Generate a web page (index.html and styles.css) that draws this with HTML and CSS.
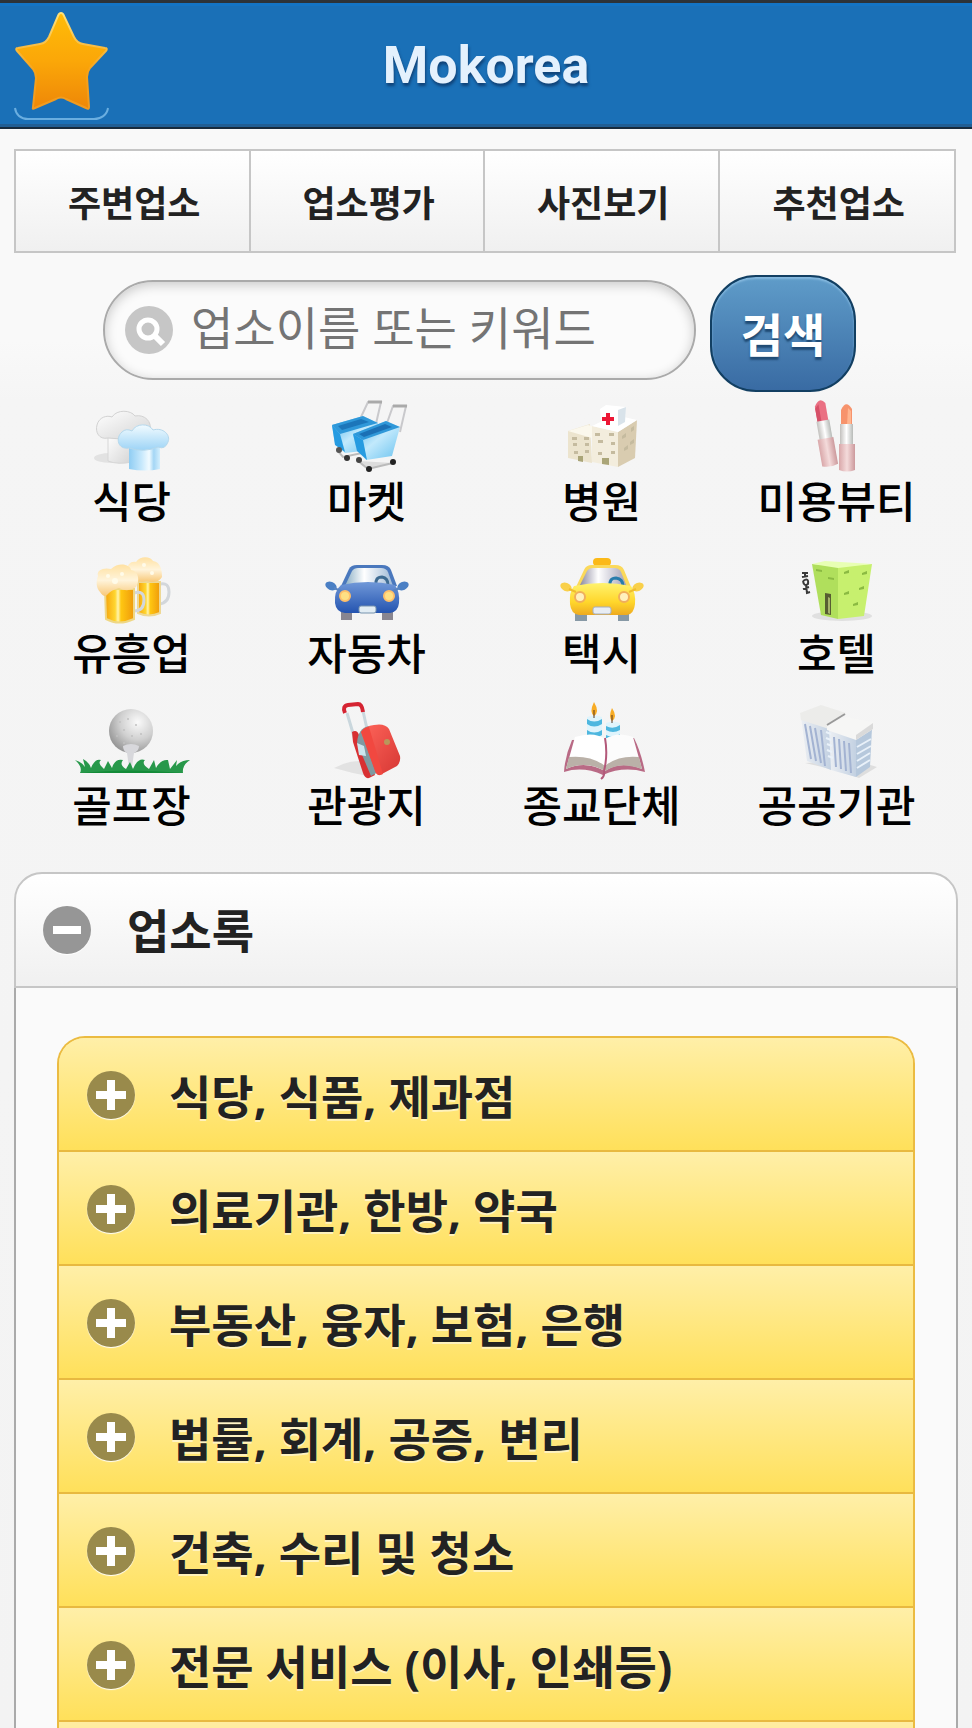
FILE: index.html
```html
<!DOCTYPE html>
<html lang="ko">
<head>
<meta charset="utf-8">
<meta name="viewport" content="width=device-width, initial-scale=1">
<title>Mokorea</title>
<link rel="stylesheet" href="styles.css">
</head>
<body>
<div class="page">
<header class="topbar">
  <a class="star-link" href="#" aria-label="Home">
    <svg viewBox="0 0 96 110" width="96" height="110">
      <defs><linearGradient id="starFill" x1="0" y1="0" x2="0" y2="1"><stop offset="0" stop-color="#ffbc08"/><stop offset=".5" stop-color="#fba708"/><stop offset="1" stop-color="#ee8708"/></linearGradient>
      <linearGradient id="starEdge" x1="0" y1="0" x2="0" y2="1"><stop offset="0" stop-color="#ffe27a"/><stop offset=".6" stop-color="#f5a31c"/><stop offset="1" stop-color="#f09a20"/></linearGradient></defs>
      <path d="M1 98C2 105 7 109 14 109H80C87 109 93 105 94 98" fill="none" stroke="#6aaee0" stroke-width="2"/>
      <path d="M47 3Q49 3 50 6L60 27Q63 33 69 34L91 38Q94 38 92 41L76 58Q73 62 73 67L75 97Q75 100 72 98L52 89Q47 86 42 89L21 98Q18 100 19 97L22 68Q22 63 19 59L3 41Q1 38 4 38L26 34Q32 33 35 27L44 6Q45 3 47 3Z" fill="url(#starFill)" stroke="url(#starEdge)" stroke-width="2"/>
    </svg>
  </a>
  <h1 class="brand">Mokorea</h1>
</header>
<nav class="tabs">
  <a href="#">주변업소</a><a href="#">업소평가</a><a href="#">사진보기</a><a href="#">추천업소</a>
</nav>
<form class="search" role="search">
  <label class="search-field">
    <svg viewBox="0 0 48 48" width="48" height="48" aria-hidden="true"><circle cx="24" cy="24" r="24" fill="#c6c6c6"/><circle cx="23" cy="23" r="9" fill="none" stroke="#fff" stroke-width="5"/><path d="M29 29L38 38" stroke="#fff" stroke-width="6"/></svg>
    <input type="search" placeholder="업소이름 또는 키워드" aria-label="업소이름 또는 키워드">
  </label>
  <button type="button">검색</button>
</form>
<main>
<section class="categories">
  <a href="#"><svg viewBox="0 0 88 80" width="88" height="80">
    <defs><linearGradient id="hatBlue"><stop offset="0" stop-color="#8fcdf3"/><stop offset=".4" stop-color="#c6e8fc"/><stop offset=".65" stop-color="#f2fbff"/><stop offset=".8" stop-color="#a4d6f5"/><stop offset="1" stop-color="#d4effd"/></linearGradient>
    <linearGradient id="hatGrey" x1="0" y1="0" x2="1" y2="1"><stop offset="0" stop-color="#fff"/><stop offset="1" stop-color="#d4d4d4"/></linearGradient>
    <linearGradient id="hatTop" x1="0" y1="0" x2="0" y2="1"><stop offset="0" stop-color="#f2fbff"/><stop offset="1" stop-color="#9dd4f6"/></linearGradient></defs>
    <ellipse cx="23" cy="62" rx="17" ry="5" fill="#e2e2e2"/><path d="M20 38V65Q30 69 44 66V38Z" fill="url(#hatGrey)" stroke="#d6d6d6"/>
    <path d="M20 42C11 44 7 36 9 29C11 21 19 19 24 21C29 13 43 14 47 20C57 18 64 26 62 34Q50 46 20 42Z" fill="url(#hatGrey)" stroke="#d2d2d2"/>
    <path d="M41 48H72V73Q57 76 41 73Z" fill="url(#hatBlue)"/>
    <path d="M41 52C30 54 27 42 34 36Q38 32 44 35C48 27 61 27 65 34C75 31 83 39 80 46Q77 54 70 51Q56 57 41 52Z" fill="url(#hatTop)" stroke="#b5d8ec"/></svg><span>식당</span></a>
  <a href="#"><svg viewBox="0 0 88 80" width="88" height="80">
    <defs><linearGradient id="cartSide" x1="0" y1="0" x2="1" y2="1"><stop offset="0" stop-color="#45aee8"/><stop offset=".5" stop-color="#c2e9fc"/><stop offset="1" stop-color="#69c2ef"/></linearGradient></defs>
    <path d="M38 21L45 6H58L52 32" fill="none" stroke="#c9c9cc" stroke-width="2"/><path d="M45 6H59" stroke="#aaa" stroke-width="3"/>
    <path d="M14 54L20 61L49 55" fill="none" stroke="#bbb" stroke-width="2"/><path d="M9 29L40 20L55 27L48 54L22 57L12 48Z" fill="url(#cartSide)"/><path d="M9 29L40 20L55 27L17 38Z" fill="#2f98d9"/><path d="M15 30L38 23L46 26L19 34Z" fill="#1c76ba"/><path d="M9 29L17 38L22 56L12 49Z" fill="#269be1"/><circle cx="16" cy="54" r="3" fill="#555"/><circle cx="24" cy="62" r="3" fill="#333"/>
    <path d="M64 27L70 10H83L77 36" fill="none" stroke="#c9c9cc" stroke-width="2"/><path d="M70 10H84" stroke="#aaa" stroke-width="3"/>
    <path d="M35 65L45 73L70 67" fill="#ddd" stroke="#bbb" stroke-width="2"/><path d="M30 38L63 25L77 31L69 60L43 64L34 54Z" fill="url(#cartSide)"/><path d="M30 38L63 25L77 31L40 44Z" fill="#2f98d9"/><path d="M36 38L62 28L69 31L41 41Z" fill="#1b70b5"/><path d="M30 38L40 44L44 64L34 55Z" fill="#269be1"/><circle cx="36" cy="64" r="3" fill="#444"/><circle cx="70" cy="66" r="3" fill="#222"/><circle cx="46" cy="73" r="3" fill="#222"/></svg><span>마켓</span></a>
  <a href="#"><svg viewBox="0 0 88 80" width="88" height="80">
    <path d="M10 35L32 28L34 67L10 62Z" fill="#ece4ce"/><path d="M10 35L30 29L58 37L34 42Z" fill="#fbf8ed"/><path d="M34 30L60 36V71L34 66Z" fill="#f3eddd"/><path d="M60 36L79 24L77 62L60 71Z" fill="#d9ccb0"/><path d="M34 30L57 19L79 24L60 36Z" fill="#fff"/>
    <path d="M42 13L48 9L68 11L67 26L60 30L43 26Z" fill="#fff"/><path d="M60 14L68 11L67 26L60 30Z" fill="#d9e3ea"/><path d="M48 17H52V21H56V25H52V29H48V25H44V21H48Z" fill="#ed1736"/>
    <g fill="#c5bb9f"><path d="M14 41h5v3h-5zM26 41h5v3h-5zM15 47h4v3h-4zM27 47h4v3h-4zM16 55h4v3h-4zM27 54h4v3h-4zM37 37h5v3h-5zM51 37h5v3h-5zM40 44h5v3h-5zM53 46h4v3h-4zM40 56h4v3h-4zM53 55h4v3h-4zM64 40l4-3v4l-4 2zM73 32l3-2v4l-3 2zM66 52l4-3v4l-4 2zM72 46l4-3v4l-4 2z"/><path d="M20 60h5v6l-5-1zM44 62h7v7l-7-1z" fill="#aaa578"/></g></svg><span>병원</span></a>
  <a href="#"><svg viewBox="0 0 88 80" width="88" height="80">
    <defs><linearGradient id="silver"><stop offset="0" stop-color="#c2c0bd"/><stop offset=".5" stop-color="#fff"/><stop offset="1" stop-color="#b7bab7"/></linearGradient><linearGradient id="pinkTube"><stop offset="0" stop-color="#d9a7a9"/><stop offset=".5" stop-color="#f4dbdb"/><stop offset="1" stop-color="#cc999c"/></linearGradient></defs>
    <g transform="rotate(-10 29 40)"><path d="M27 26V10Q33 0 38 8V26Z" fill="#ea7083"/><path d="M27 26V12L31 8V26Z" fill="#d65068"/><path d="M26 25H39V44H26Z" fill="url(#silver)"/><path d="M24 43H40V70Q32 73 24 70Z" fill="url(#pinkTube)"/></g>
    <path d="M48 29V14Q53 3 59 13V29Z" fill="#f7936c"/><path d="M55 12L58 15V29H54Z" fill="#ffb58f"/><path d="M47 28H60V49H47Z" fill="url(#silver)"/><path d="M46 48H62V74Q54 77 46 74Z" fill="url(#pinkTube)"/></svg><span>미용뷰티</span></a>

  <a href="#"><svg viewBox="0 0 88 80" width="88" height="80">
    <defs><linearGradient id="beer"><stop offset="0" stop-color="#f5a20b"/><stop offset=".35" stop-color="#ffd62f"/><stop offset=".45" stop-color="#fff5ae"/><stop offset=".55" stop-color="#ffc712"/><stop offset="1" stop-color="#ef9a0b"/></linearGradient><linearGradient id="foam" x1="0" y1="0" x2="0" y2="1"><stop offset="0" stop-color="#ffe1a1"/><stop offset=".5" stop-color="#fff4db"/><stop offset="1" stop-color="#f8c878"/></linearGradient></defs>
    <path d="M72 36Q81 34 81 44Q81 55 71 56" fill="none" stroke="#d3d7db" stroke-width="3"/><path d="M50 34H72V65Q61 70 50 65Z" fill="url(#beer)" stroke="#eed894" stroke-width="2"/><path d="M39 26C38 15 44 13 48 14C53 7 63 9 65 13C73 14 74 23 74 29Q70 36 59 33Q48 36 39 26Z" fill="url(#foam)"/>
    <path d="M46 45Q56 42 56 52Q56 63 46 63" fill="none" stroke="#d3d7db" stroke-width="3"/><path d="M17 41H46V71Q31 78 18 71Z" fill="url(#beer)" stroke="#efd784" stroke-width="2"/><path d="M12 44C8 40 8 33 10 28C8 22 16 19 23 21C31 13 43 17 43 22C51 23 52 33 48 39Q40 45 31 40Q23 42 19 47Q16 50 12 44Z" fill="url(#foam)"/><g fill="#fffbe9"><circle cx="20" cy="28" r="2"/><circle cx="34" cy="26" r="2"/><circle cx="27" cy="33" r="3"/><circle cx="56" cy="17" r="2"/><circle cx="64" cy="25" r="2"/></g></svg><span>유흥업</span></a>
  <a href="#"><svg viewBox="0 0 88 80" width="88" height="80">
    <defs><linearGradient id="blueCar" x1="0" y1="0" x2="0" y2="1"><stop offset="0" stop-color="#7098d8"/><stop offset="1" stop-color="#2454b0"/></linearGradient><linearGradient id="glass"><stop offset="0" stop-color="#8bafc5"/><stop offset=".4" stop-color="#fff"/><stop offset="1" stop-color="#9eb9d6"/></linearGradient></defs>
    <path d="M18 58H29V72H18ZM59 58H70V72H59Z" fill="#888590"/><path d="M18 38L26 21Q28 17 34 17H59Q66 17 68 22L74 38Z" fill="#4a78bd"/><path d="M22 38L29 23Q31 20 35 20H58Q63 20 65 24L70 38Z" fill="url(#glass)"/><path d="M53 37Q52 29 59 29Q65 30 65 37" fill="none" stroke="#3e6b92" stroke-width="3"/>
    <path d="M18 37Q45 31 72 37Q77 44 76 55Q75 64 67 65H22Q13 64 12 55Q11 43 18 37Z" fill="url(#blueCar)"/><ellipse cx="8" cy="38" rx="6" ry="4" transform="rotate(25 8 38)" fill="#4a7fc4"/><ellipse cx="80" cy="38" rx="6" ry="4" transform="rotate(-25 80 38)" fill="#4a7fc4"/><path d="M11 40L18 43M77 40L70 43" stroke="#5884c2" stroke-width="2"/><circle cx="22" cy="48" r="5" fill="#ffe084" stroke="#ffc06a" stroke-width="2"/><circle cx="66" cy="48" r="5" fill="#ffe084" stroke="#ffc06a" stroke-width="2"/><rect x="36" y="58" width="17" height="7" rx="2" fill="#e2edf4" stroke="#7793ae"/></svg><span>자동차</span></a>
  <a href="#"><svg viewBox="0 0 88 80" width="88" height="80">
    <defs><linearGradient id="taxi" x1="0" y1="0" x2="0" y2="1"><stop offset="0" stop-color="#fff36d"/><stop offset=".6" stop-color="#ffd62b"/><stop offset="1" stop-color="#eeaa20"/></linearGradient>
    <linearGradient id="taxiGlass"><stop offset="0" stop-color="#86849a"/><stop offset=".4" stop-color="#fff"/><stop offset="1" stop-color="#a09eb4"/></linearGradient></defs>
    <path d="M17 58H29V73H17ZM60 58H71V73H60Z" fill="#8799a6"/><rect x="35" y="10" width="18" height="8" rx="4" fill="#fbb918"/><path d="M18 39L26 22Q28 17 34 17H57Q64 17 66 22L73 39Z" fill="#fbd95a"/><path d="M21 39L29 23Q31 20 35 20H56Q61 20 63 24L69 39Z" fill="url(#taxiGlass)"/><path d="M52 38Q51 30 58 30Q65 31 65 38" fill="none" stroke="#277cac" stroke-width="3"/>
    <path d="M16 38Q45 32 73 38Q78 45 77 56Q76 66 69 67H21Q13 66 12 56Q11 44 16 38Z" fill="url(#taxi)"/><ellipse cx="8" cy="39" rx="6" ry="4" transform="rotate(25 8 39)" fill="#f9d04a"/><ellipse cx="80" cy="39" rx="6" ry="4" transform="rotate(-25 80 39)" fill="#f9d04a"/><path d="M11 41L18 44M78 41L71 44" stroke="#f0bd2e" stroke-width="2"/><circle cx="22" cy="49" r="5" fill="#fff0be" stroke="#f0ae5c" stroke-width="2"/><circle cx="66" cy="49" r="5" fill="#fff0be" stroke="#f0ae5c" stroke-width="2"/><rect x="35" y="59" width="18" height="7" rx="2" fill="#e8edf4" stroke="#a5aec0"/></svg><span>택시</span></a>
  <a href="#"><svg viewBox="0 0 88 80" width="88" height="80">
    <ellipse cx="49" cy="68" rx="30" ry="5" fill="#e0e0e0"/><path d="M19 16L45 18V71L28 67Z" fill="#b0df5c"/><path d="M45 18L79 16L71 68L45 71Z" fill="#c7f06e"/><path d="M19 16L32 13L79 16L45 20Z" fill="#e8ffb4"/><path d="M32 45L38 46V67L32 66Z" fill="#575d31"/><path d="M35 49L37 50V66L35 65Z" fill="#a5b36a"/>
    <path d="M9 25L15 25M9 29L15 28M12 25V29M10 33Q16 29 15 36Q11 39 10 33M10 41L16 39M13 37L14 45L17 44" fill="none" stroke="#393939" stroke-width="2"/><g fill="#8bba42"><path d="M23 21l6 1v2l-6-1zM35 29l6 1v2l-6-1zM51 24l5-2v3l-5 1zM69 25l5-2v3l-5 1zM51 45l5-2v3l-5 1zM66 40l5-2v3l-5 1zM60 56l5-2v3l-5 1z"/></g></svg><span>호텔</span></a>

  <a href="#"><svg viewBox="0 0 120 80" width="120" height="80">
    <defs><radialGradient id="golfBall" cx=".65" cy=".3" r=".8"><stop offset="0" stop-color="#fafafa"/><stop offset=".5" stop-color="#d0d0d0"/><stop offset="1" stop-color="#8b8b8b"/></radialGradient></defs>
    <circle cx="59" cy="31" r="22" fill="url(#golfBall)"/><g fill="#c0c0c0"><circle cx="48" cy="22" r="1"/><circle cx="56" cy="19" r="1"/><circle cx="64" cy="25" r="1"/><circle cx="52" cy="30" r="1"/><circle cx="60" cy="36" r="1"/><circle cx="45" cy="36" r="1"/><circle cx="69" cy="34" r="1"/><circle cx="52" cy="43" r="1"/></g><path d="M51 46Q59 42 67 46Q67 51 62 53L60 67H57L55 53Q51 51 51 46Z" fill="#d8d8dc"/>
    <path d="M3 60Q10 62 13 67L11 59Q17 62 19 68Q23 58 29 60Q25 63 32 69L36 61L40 68Q43 58 51 60Q47 65 54 69L58 62L61 69Q66 57 73 60Q69 64 77 69L82 60L84 68Q89 59 96 60L98 69L105 60L104 66Q109 60 118 60Q110 65 111 73H8Q11 67 3 60Z" fill="#27984a"/><path d="M10 73Q55 68 110 73Z" fill="#138b38"/></svg><span>골프장</span></a>
  <a href="#"><svg viewBox="0 0 88 80" width="88" height="80">
    <defs><linearGradient id="bagFront" x1="0" y1="0" x2="1" y2="1"><stop offset="0" stop-color="#ff655a"/><stop offset="1" stop-color="#d63734"/></linearGradient></defs>
    <path d="M11 68Q26 60 39 61L45 76Q28 73 11 68Z" fill="#e2e2e2"/><path d="M24 13L35 50M40 11L46 38" fill="none" stroke="#cad7dd" stroke-width="3"/><path d="M22 13Q19 6 25 5L35 4Q39 4 40 12" fill="none" stroke="#d52432" stroke-width="4"/><path d="M29 32Q34 29 36 35L52 75L46 78Q42 79 40 73L30 42Z" fill="#d83032"/><path d="M34 43Q35 28 46 26L59 70L48 76Z" fill="#7f9aa1"/><path d="M38 32Q42 26 51 25Q62 23 66 29L77 56Q78 62 74 66L57 75Q54 76 52 70Z" fill="url(#bagFront)"/><path d="M38 32Q41 27 46 27L60 74Q54 77 52 71Z" fill="#f14840"/><path d="M34 43L41 46L43 56L36 55Z" fill="#cce6ee"/><circle cx="64" cy="42" r="3" fill="#b9975b"/></svg><span>관광지</span></a>
  <a href="#"><svg viewBox="0 0 88 80" width="88" height="80">
    <path d="M29 17Q37 14 44 17V40H29ZM48 23Q55 20 62 23V40H48Z" fill="#dff4fc"/><path d="M29 19Q36 24 44 19V24Q36 29 29 24ZM29 30Q36 35 44 30V35Q36 40 29 35ZM48 26Q55 30 62 25V30Q55 34 48 30ZM48 35Q55 39 62 34V38H48Z" fill="#4eb7df"/><path d="M36 16Q31 12 36 2Q42 12 36 16M54 21Q50 17 54 8Q60 17 54 21" fill="#f8ac25"/><path d="M36 10V18M54 15V23" stroke="#56351e" stroke-width="1"/>
    <path d="M14 40Q7 56 6 72Q25 66 45 75Q65 66 87 72Q83 52 76 38Z" fill="#b96a85"/><path d="M17 37Q36 31 47 39V71Q27 60 8 69Z" fill="#fff"/><path d="M47 39Q60 31 75 37L84 69Q62 60 47 71Z" fill="#fcfcfc"/><path d="M11 57Q33 55 47 66V71Q28 60 8 69ZM47 66Q60 55 81 57L84 69Q62 61 47 71Z" fill="#bab1a8"/><path d="M47 38Q50 55 46 71Q47 76 43 79" fill="none" stroke="#b3597a" stroke-width="2"/></svg><span>종교단체</span></a>
  <a href="#"><svg viewBox="0 0 88 80" width="88" height="80">
    <defs><linearGradient id="tower"><stop offset="0" stop-color="#eceff3"/><stop offset="1" stop-color="#c3d1e2"/></linearGradient></defs>
    <path d="M12 63Q44 70 66 78L84 67Q63 59 12 63Z" fill="#dedede"/><path d="M8 17L38 28V70L14 61Z" fill="url(#tower)"/><path d="M36 28L63 38V77L38 70Z" fill="url(#tower)"/><path d="M63 38L79 28L77 67L63 77Z" fill="#b6c8dc"/>
    <path d="M12 24L18 59M17 26L23 61M22 28L28 63M28 30L32 66M41 37L43 67M46 39L48 69M51 41L53 71M56 43L58 73" stroke="#a3b3d2" stroke-width="2"/><path d="M33 32L38 34M33 38L38 40M34 44L39 46M34 50L39 52M35 56L40 58M64 47L78 39M64 54L78 46M64 61L77 53M64 68L77 60" stroke="#e9f1f9" stroke-width="2"/>
    <path d="M7 13L28 5L53 13L36 25V29L8 20Z" fill="#ececea"/><path d="M34 26L52 17L80 22V29L63 40L34 30Z" fill="#f6f6f5"/><path d="M63 35L80 23V29L63 40Z" fill="#dadada"/><path d="M34 25L52 14" stroke="#999" stroke-width="2"/></svg><span>공공기관</span></a>
</section>
<section class="directory">
  <button class="directory-head" type="button" aria-expanded="true"><i class="sign minus"></i><span>업소록</span></button>
  <div class="directory-body">
    <div class="groups">
      <button type="button"><i class="sign plus"></i><span>식당, 식품, 제과점</span></button>
      <button type="button"><i class="sign plus"></i><span>의료기관, 한방, 약국</span></button>
      <button type="button"><i class="sign plus"></i><span>부동산, 융자, 보험, 은행</span></button>
      <button type="button"><i class="sign plus"></i><span>법률, 회계, 공증, 변리</span></button>
      <button type="button"><i class="sign plus"></i><span>건축, 수리 및 청소</span></button>
      <button type="button"><i class="sign plus"></i><span>전문 서비스 (이사, 인쇄등)</span></button>
    </div>
  </div>
</section>
</main>
</div>
</body>
</html>
```
FILE: styles.css
```css
* { box-sizing: border-box; }
body { margin: 0; font-family: "Noto Sans CJK KR", sans-serif; color: #222; }
a { color: inherit; text-decoration: none; }
button { font-family: "Noto Sans", "Noto Sans CJK KR", sans-serif; color: inherit; cursor: pointer; }

.page {
  height: 100vh;
  overflow: hidden;
  display: flex;
  flex-direction: column;
  background: linear-gradient(#f9f9f9 0, #f9f9f9 340px, #f5f5f5 400px, #f3f3f3 100%);
}

.topbar {
  flex: none;
  height: 129px;
  padding: 0 14px;
  display: grid;
  grid-template-columns: 96px 1fr 96px;
  align-items: center;
  background: #1a70b7;
  border-top: 3px solid #2d3338;
  border-bottom: 2px solid #172b3d;
  box-shadow: inset 0 -3px #205e94, inset 0 3px #1474c4;
}
.star-link { display: block; height: 110px; }
.star-link svg { display: block; }
.brand {
  margin: 0;
  padding-top: 2px;
  text-align: center;
  font: bold 52px/60px Roboto, sans-serif;
  color: #e4f1fd;
  text-shadow: 1px 3px 3px #104378;
}

.tabs {
  flex: none;
  display: grid;
  grid-template-columns: repeat(4, 1fr);
  margin: 20px 16px 0 14px;
  border: 2px solid #c6c6c6;
}
.tabs a {
  height: 100px;
  display: flex;
  align-items: center;
  justify-content: center;
  padding-left: 4px;
  font-size: 36px;
  line-height: 52px;
  font-weight: 700;
  background: linear-gradient(#fff, #f0f0f0);
}
.tabs a:not(:last-child) { border-right: 2px solid #c6c6c6; }

.search {
  flex: none;
  display: flex;
  align-items: flex-start;
  justify-content: center;
  gap: 14px;
  margin: 22px 116px 0 103px;
}
.search-field {
  flex: 1;
  min-width: 0;
  height: 100px;
  margin-top: 5px;
  display: flex;
  align-items: center;
  gap: 18px;
  padding: 0 20px;
  border: 2px solid #aaa;
  border-radius: 50px;
  background: #fbfbfb;
  box-shadow: inset 0 3px 12px rgba(0, 0, 0, .2);
}
.search-field svg { flex: none; }
.search-field input {
  flex: 1;
  min-width: 0;
  height: 72px;
  padding: 0 0 6px;
  border: 0;
  outline: 0;
  background: none;
  font: 46px/66px "Noto Sans", "Noto Sans CJK KR", sans-serif;
}
.search-field input::placeholder { color: #747474; opacity: 1; }
.search button {
  width: 146px;
  height: 117px;
  padding: 0;
  border: 2px solid #123f62;
  border-radius: 46px;
  background: linear-gradient(#5f9cc9, #396ba3);
  box-shadow: inset 0 2px 2px #86b9df;
  color: #fff;
  font-size: 46px;
  line-height: 68px;
  font-weight: 700;
  text-shadow: 0 3px 2px #1f4a73;
}

main { flex: 1; min-height: 0; display: flex; flex-direction: column; }
.categories {
  flex: none;
  display: grid;
  grid-template-columns: repeat(4, 1fr);
  row-gap: 26px;
  margin: 4px 18px 0 14px;
}
.categories a {
  display: flex;
  flex-direction: column;
  align-items: center;
  font-size: 43px;
  line-height: 46px;
  font-weight: 500;
  color: #000;
}
.categories svg { display: block; }

.directory {
  flex: 1;
  min-height: 0;
  display: flex;
  flex-direction: column;
  margin: 46px 14px 0 14px;
}
.directory-head {
  flex: none;
  height: 116px;
  display: flex;
  align-items: center;
  gap: 36px;
  padding: 0 27px;
  border: 2px solid #c6c6c6;
  border-radius: 28px 28px 0 0;
  background: linear-gradient(#fff, #f0f0f0);
  font-size: 46px;
  line-height: 68px;
  font-weight: 700;
}
.groups span { padding-top: 2px; }
.directory-body {
  flex: 1;
  min-height: 0;
  display: flex;
  padding: 48px 41px 0;
  border: solid #aaa;
  border-width: 0 2px;
  background: #fafafa;
}
.groups {
  flex: 1;
  overflow: hidden;
  border: 2px solid #ebbb41;
  border-bottom: 0;
  border-radius: 28px 28px 0 0;
  background: #ffeda0;
}
.groups button {
  width: 100%;
  height: 114px;
  display: flex;
  align-items: center;
  gap: 34px;
  padding: 2px 28px 0;
  border: 0;
  border-bottom: 2px solid #e8b940;
  background: linear-gradient(#ffefa8, #ffe05a);
  font-size: 46px;
  line-height: 68px;
  font-weight: 700;
  text-shadow: 0 2px 0 #fff8;
}
.sign {
  flex: none;
  width: 48px;
  height: 48px;
  border-radius: 50%;
  box-shadow: 0 1px 1px #fff;
}
.minus { background: linear-gradient(#fff, #fff) center / 28px 8px no-repeat #969696; }
.plus {
  background:
    linear-gradient(#fff, #fff) center / 30px 8px no-repeat,
    linear-gradient(#fff, #fff) center / 8px 30px no-repeat #998a4b;
}
```
